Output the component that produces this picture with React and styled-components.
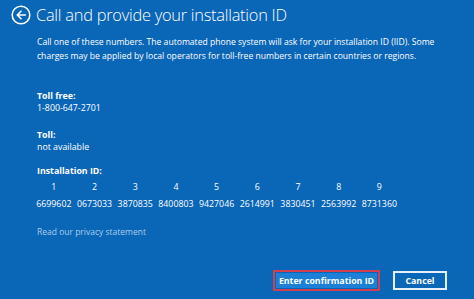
import React from "react";
import styled, { createGlobalStyle } from "styled-components";

const Global = createGlobalStyle`
  html, body { margin: 0; padding: 0; background: #0a66b6; }
  * { box-sizing: border-box; }
`;

const Page = styled.div`
  width: 474px;
  height: 299px;
  overflow: hidden;
  background: #0a66b6;
  color: #ffffff;
  font-family: "Open Sans", "Noto Sans", "Liberation Sans", sans-serif;
  display: flex;
  flex-direction: column;
`;

const Header = styled.div`
  display: flex;
  align-items: center;
  gap: 5px;
  height: 30px;
  padding-left: 11px;
`;

const Title = styled.h1`
  margin: 0;
  font-size: 16.4px;
  font-weight: 300;
  letter-spacing: -0.25px;
  line-height: 30px;
  white-space: nowrap;
`;

const Content = styled.div`
  padding-left: 37px;
  display: flex;
  flex-direction: column;
`;

const Para = styled.p`
  margin: 4.5px 0 0;
  font-size: 8.6px;
  line-height: 14px;
  width: 420px;
`;

const Group = styled.div`
  margin-top: ${(p) => p.$top}px;
  font-size: 8.8px;
  line-height: 12px;
`;

const Label = styled.div`
  font-weight: 700;
`;

const Value = styled.div``;

const IdGrid = styled.div`
  display: grid;
  grid-template-columns: repeat(9, 40.7px);
  justify-items: center;
  margin-left: -3.5px;
  font-size: 8.8px;
  line-height: 12px;
  row-gap: 5px;
  margin-top: 4px;
`;

const Link = styled.div`
  margin-top: 16px;
  font-size: 8.5px;
  line-height: 12px;
  color: #a9cdef;
`;

const Footer = styled.div`
  display: flex;
  justify-content: flex-end;
  align-items: center;
  gap: 13px;
  padding-right: 27px;
  margin-top: 32px;
`;

const Highlight = styled.div`
  border: 2px solid #d2404f;
  padding: 1px;
  width: 107px;
  height: 21px;
  display: flex;
`;

const PrimaryButton = styled.button`
  flex: 1;
  border: none;
  background: #1b80d6;
  color: #fff;
  font-family: inherit;
  font-weight: 700;
  font-size: 8.8px;
  padding: 0;
  cursor: pointer;
`;

const SecondaryButton = styled.button`
  width: 54px;
  height: 19px;
  border: 2px solid #e6f0fa;
  background: transparent;
  color: #fff;
  font-family: inherit;
  font-weight: 700;
  font-size: 8.8px;
  padding: 0;
  cursor: pointer;
`;

const BackIcon = () => (
  <svg width="20" height="20" viewBox="0 0 20 20" fill="none">
    <circle cx="10" cy="10" r="8.8" stroke="#fff" strokeWidth="1.6" />
    <path d="M14.3 10H6.3M10 6.2L6.2 10L10 13.8" stroke="#fff" strokeWidth="1.6" strokeLinecap="round" strokeLinejoin="round" />
  </svg>
);

const ids = ["6699602", "0673033", "3870835", "8400803", "9427046", "2614991", "3830451", "2563992", "8731360"];

export default function App() {
  return (
    <Page>
      <Global />
      <Header>
        <BackIcon />
        <Title>Call and provide your installation ID</Title>
      </Header>
      <Content>
        <Para>
          Call one of these numbers. The automated phone system will ask for your installation ID (IID). Some
          charges may be applied by local operators for toll-free numbers in certain countries or regions.
        </Para>
        <Group $top={27.5}>
          <Label>Toll free:</Label>
          <Value>1-800-647-2701</Value>
        </Group>
        <Group $top={15}>
          <Label>Toll:</Label>
          <Value>not available</Value>
        </Group>
        <Group $top={12}>
          <Label>Installation ID:</Label>
        </Group>
        <IdGrid>
          {ids.map((_, i) => (
            <div key={"n" + i}>{i + 1}</div>
          ))}
          {ids.map((id) => (
            <div key={id}>{id}</div>
          ))}
        </IdGrid>
        <Link>Read our privacy statement</Link>
      </Content>
      <Footer>
        <Highlight>
          <PrimaryButton>Enter confirmation ID</PrimaryButton>
        </Highlight>
        <SecondaryButton>Cancel</SecondaryButton>
      </Footer>
    </Page>
  );
}
